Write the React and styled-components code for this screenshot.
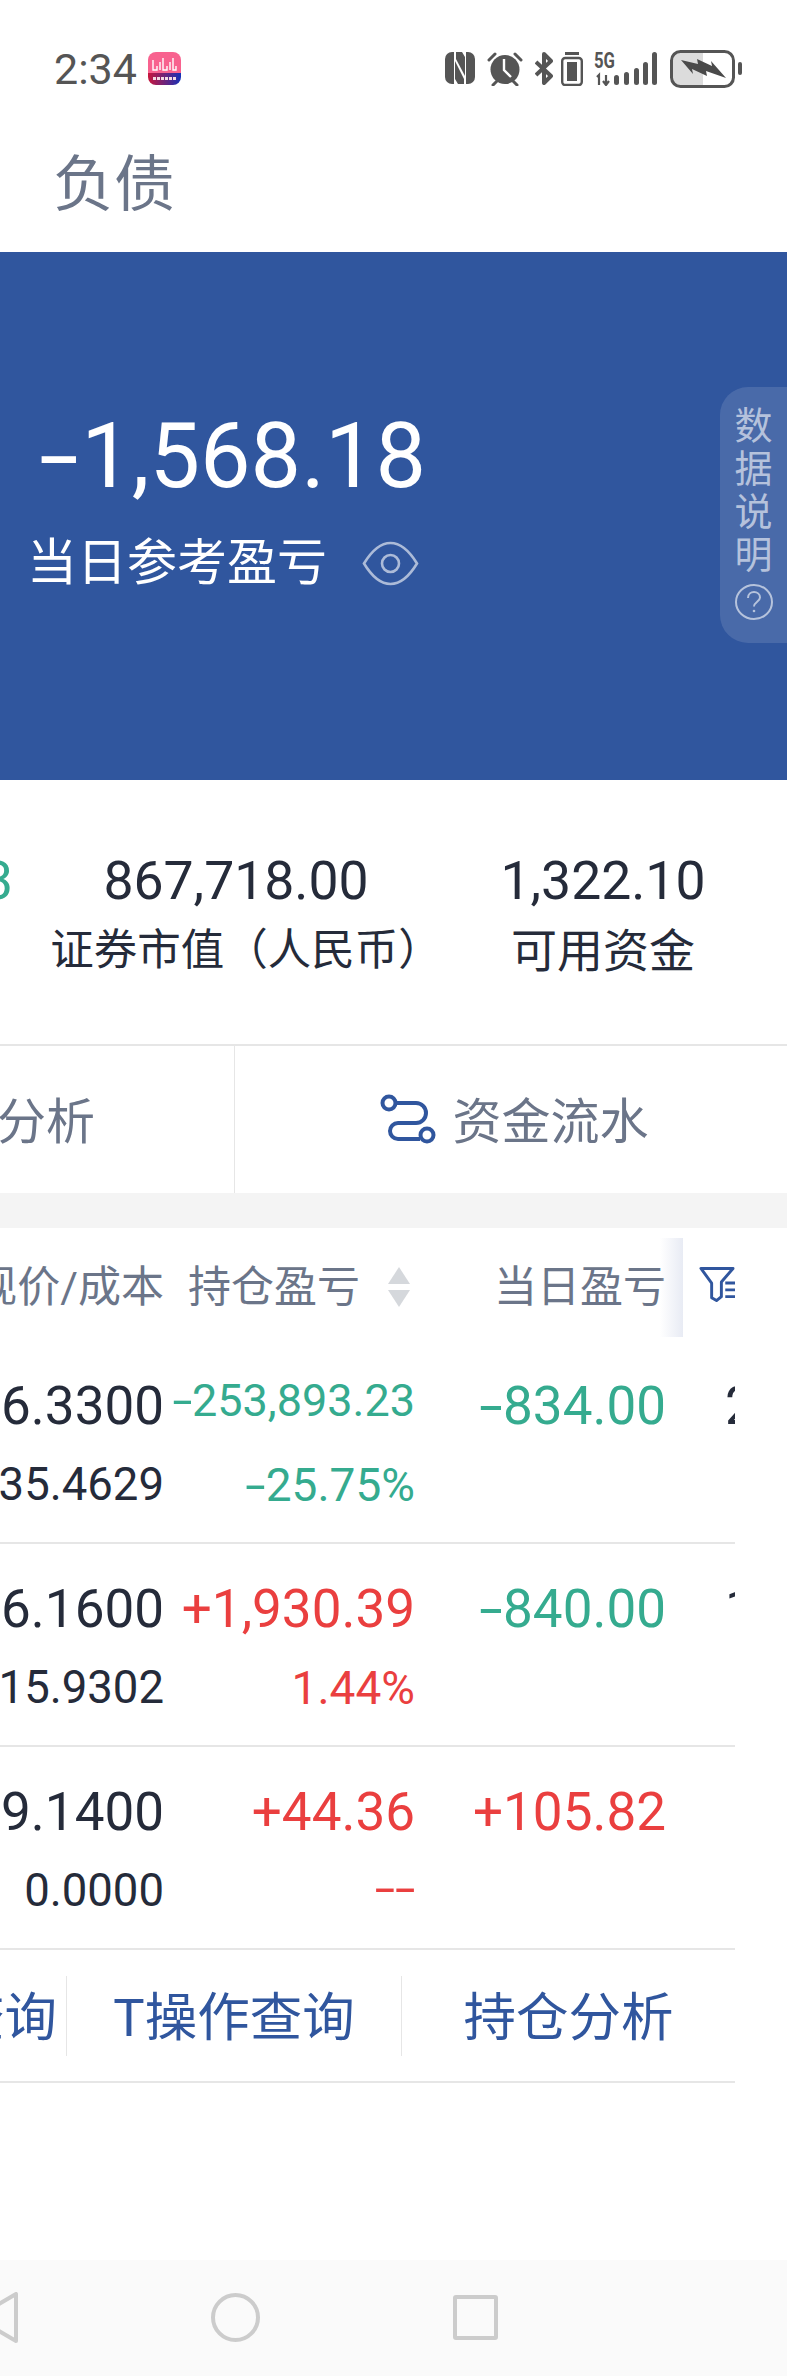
import React from 'react';
import styled, { createGlobalStyle } from 'styled-components';

const GlobalStyle = createGlobalStyle`
    html, body {
        margin: 0;
        padding: 0;
        background: #fff;
        font-family: Roboto, "Noto Sans CJK SC", sans-serif;
    }
`;

const Page = styled.div`
    width: 787px;
    height: 2376px;
    display: flex;
    flex-direction: column;
    overflow: hidden;
    background: #fff;
`;

// status bar
const StatusBar = styled.div`
    height: 133px;
    box-sizing: border-box;
    display: flex;
    justify-content: space-between;
    padding: 45px 45px 0 54px;
    color: #555;
`;

const Clock = styled.div`
    display: flex;
    align-items: flex-start;
    gap: 11px;
    font-size: 43px;
    line-height: 48px;
`;

const AppBadge = styled.svg`
    margin-top: 7px;
`;

const StatusIcons = styled.div`
    display: flex;
    align-items: flex-start;
    margin-top: 7px;
    svg { display: block; }
`;

const StatusGlyph = styled.svg`
    margin-right: ${props => props.$gap || 0}px;
    margin-top: ${props => props.$top || 0}px;
`;

const TitleBar = styled.div`
    height: 119px;
    box-sizing: border-box;
    display: flex;
    align-items: center;
    padding: 0 0 26px 53px;
    font-size: 61px;
    color: #6b7589;
`;

// blue panel
const Hero = styled.div`
    position: relative;
    height: 528px;
    box-sizing: border-box;
    padding: 155px 0 0 27px;
    background: #30569e;
    color: #fff;
`;

const HeroValue = styled.div`
    font-size: 90px;
    line-height: 100px;
    margin-left: 14px;
`;

const HeroLabel = styled.div`
    display: flex;
    align-items: center;
    gap: 35px;
    margin-top: 26px;
    font-size: 50px;
    line-height: 60px;
`;

const SideTab = styled.div`
    position: absolute;
    top: 135px;
    right: 0;
    width: 67px;
    height: 256px;
    box-sizing: border-box;
    padding-top: 18px;
    display: flex;
    flex-direction: column;
    align-items: center;
    border-radius: 28px 0 0 28px;
    background: rgba(255, 255, 255, 0.12);
    color: rgba(255, 255, 255, 0.6);
    font-size: 38px;
    line-height: 43px;
    text-align: center;
`;

const SideChars = styled.div`
    width: 38px;
    margin-bottom: 7px;
`;

// summary figures
const Stats = styled.div`
    height: 264px;
    box-sizing: border-box;
    padding-top: 69px;
    display: grid;
    grid-template-columns: 13px 446px 288px;
    overflow: hidden;
`;

const Stat = styled.div`
    display: flex;
    flex-direction: column;
    align-items: ${props => props.$edge ? 'flex-end' : 'center'};
    white-space: nowrap;
`;

const StatValue = styled.div`
    font-size: 53.5px;
    line-height: 64px;
    color: ${props => props.color || '#252b3a'};
`;

const StatLabel = styled.div`
    margin-top: 10px;
    margin-left: ${props => props.$nudge || 0}px;
    font-size: ${props => props.$size || 44}px;
    line-height: 56px;
    color: #252b3a;
`;

const Actions = styled.div`
    height: 149px;
    box-sizing: border-box;
    display: flex;
    border-top: 2px solid #e6e6e6;
    font-size: 49px;
    color: #6b7589;
`;

const ActionLeft = styled.div`
    width: 235px;
    box-sizing: border-box;
    display: flex;
    align-items: center;
    justify-content: flex-end;
    padding: 0 139px 4px 0;
    border-right: 1px solid #e6e6e6;
    white-space: nowrap;
`;

const ActionRight = styled.div`
    flex: 1;
    display: flex;
    align-items: center;
    justify-content: center;
    gap: 16px;
    padding: 0 0 4px 7px;
`;

const FlowSvg = styled.svg`
    margin-top: 4px;
`;

const Band = styled.div`
    height: 35px;
    background: #f4f4f4;
`;

// holdings table
const Table = styled.div`
    width: 735px;
    overflow: hidden;
`;

const COLUMNS = '164px 251px 251px 69px';

const HeaderRow = styled.div`
    position: relative;
    height: 113px;
    box-sizing: border-box;
    padding-top: 4px;
    display: grid;
    grid-template-columns: ${COLUMNS};
    align-items: center;
    font-size: 43px;
    line-height: 56px;
    color: #6b7589;
    white-space: nowrap;
`;

const HeaderCell = styled.div`
    display: flex;
    align-items: center;
    justify-content: flex-end;
    gap: ${props => props.$gap || 0}px;
    padding-right: ${props => props.$pad || 0}px;
`;

const FilterCell = styled.div`
    padding: 0 0 4px 33px;
    display: flex;
`;

const Fade = styled.div`
    position: absolute;
    top: 10px;
    left: 660px;
    width: 23px;
    height: 99px;
    background: linear-gradient(to right, rgba(232, 235, 244, 0), #e8ebf4);
`;

const SortArrows = styled.div`
    display: flex;
    flex-direction: column;
    gap: 6px;
`;

const Arrow = styled.div`
    width: 0;
    height: 0;
    border-left: 11px solid transparent;
    border-right: 11px solid transparent;
    border-${props => props.$down ? 'top' : 'bottom'}: 17px solid #d5d8dc;
`;

const Row = styled.div`
    height: 203px;
    box-sizing: border-box;
    padding-top: 33px;
    display: grid;
    grid-template-columns: ${COLUMNS};
    border-bottom: 2px solid #e6e6e6;
    white-space: nowrap;
`;

const Cell = styled.div`
    display: flex;
    flex-direction: column;
    align-items: ${props => props.$start ? 'flex-start' : 'flex-end'};
    padding-left: ${props => props.$start ? 59 : 0}px;
`;

const Main = styled.div`
    height: 64px;
    font-size: ${props => props.$small ? 45 : 53}px;
    line-height: ${props => props.$small ? 54 : 64}px;
    color: ${props => props.color || '#252b3a'};
`;

const Sub = styled.div`
    margin-top: 20px;
    font-size: ${props => props.$size || 45.5}px;
    line-height: 54px;
    color: ${props => props.color || '#252b3a'};
`;

// the app's minus is wider than Roboto's hyphen
const Minus = styled.span`
    display: inline-block;
    transform: scaleX(1.6);
    transform-origin: right;
    margin-left: ${props => props.$lead}em;
    margin-right: ${props => props.$gap}em;
`;

const Dashes = styled.span`
    display: inline-block;
    transform: translateY(-3px) scaleX(1.6);
    transform-origin: right;
`;

const Links = styled.div`
    height: 133px;
    box-sizing: border-box;
    display: grid;
    grid-template-columns: 67px 335px 1fr;
    align-items: center;
    border-bottom: 2px solid #e6e6e6;
    font-size: 52.5px;
    color: #30569e;
    white-space: nowrap;
`;

const LinkCell = styled.div`
    height: 80px;
    box-sizing: border-box;
    display: flex;
    align-items: center;
    justify-content: ${props => props.$edge ? 'flex-end' : 'center'};
    padding: 0 ${props => props.$edge ? 9 : 0}px 6px 0;
    border-right: ${props => props.$last ? 'none' : '1px solid #e6e6e6'};
`;

// system navigation
const NavBar = styled.div`
    margin-top: auto;
    height: 116px;
    box-sizing: border-box;
    padding-bottom: 2px;
    flex-shrink: 0;
    display: grid;
    grid-template-columns: repeat(3, 240px);
    margin-left: -125px;
    width: 912px;
    align-items: center;
    justify-items: center;
    background: #fafafa;
`;

const NavCircle = styled.div`
    width: 49px;
    height: 49px;
    box-sizing: border-box;
    border: 4px solid #ccc;
    border-radius: 50%;
`;

const NavSquare = styled.div`
    width: 45px;
    height: 45px;
    box-sizing: border-box;
    border: 4px solid #ccc;
    border-radius: 3px;
`;

const GREEN = '#35ab8f';
const RED = '#ea3f3f';

const rows = [
    { price: '6.3300', cost: '35.4629', pnl: '-253,893.23', small: true, pct: '-25.75%', tone: GREEN, day: '-834.00', dayTone: GREEN, next: '2' },
    { price: '6.1600', cost: '15.9302', pnl: '+1,930.39', pct: '1.44%', tone: RED, day: '-840.00', dayTone: GREEN, next: '1' },
    { price: '9.1400', cost: '0.0000', pnl: '+44.36', pct: '--', tone: RED, day: '+105.82', dayTone: RED },
];

const signed = (text, lead = 0.14, gap = 0) => {
    if (text === '--') return <Dashes>--</Dashes>;
    if (text[0] !== '-') return text;
    return <><Minus $lead={lead} $gap={gap}>-</Minus>{text.slice(1)}</>;
};

const AppIcon = () => (
    <AppBadge width="33" height="33" viewBox="0 0 33 33">
        <defs>
            <linearGradient id="badgeBar" x1="0" x2="1" y1="0" y2="0">
                <stop offset="0" stopColor="#c8163c" />
                <stop offset="1" stopColor="#1531b8" />
            </linearGradient>
            <clipPath id="badgeClip">
                <rect width="33" height="33" rx="8" />
            </clipPath>
        </defs>
        <g clipPath="url(#badgeClip)">
            <rect width="33" height="22" fill="#f8628f" />
            <rect y="21" width="33" height="12" fill="url(#badgeBar)" />
            <path d="M5 8v10h4v-4M12 10v8M15 6v12h4v-4M22 10v8M25 6v12h3v-4" stroke="#fff" strokeWidth="1.4" fill="none" />
            <path d="M5 26.500H28" stroke="#f3dbe3" strokeWidth="3" strokeDasharray="3 1" />
        </g>
    </AppBadge>
);

const NfcIcon = () => (
    <StatusGlyph $gap={12} width="30" height="32" viewBox="0 0 30 32" fill="#555">
        <path d="M7 0H9V32H7A7 7 0 0 1 0 25V7A7 7 0 0 1 7 0Z" />
        <path d="M23 0H21V32H23A7 7 0 0 0 30 25V7A7 7 0 0 0 23 0Z" />
        <path d="M11 0H17L20 5V24L11 7Z" />
        <path d="M10 9L19 27V32H13L10 27Z" />
    </StatusGlyph>
);

const AlarmIcon = () => (
    <StatusGlyph $gap={12} width="36" height="34" viewBox="0 0 36 34">
        <circle cx="18" cy="17.500" r="14.500" fill="#555" />
        <path d="M2 8l6-6M34 8l-6-6M6 33l4-4M30 33l-4-4" stroke="#555" strokeWidth="3" strokeLinecap="round" />
        <path d="M17 7v11l7 7" stroke="#fff" strokeWidth="2.4" fill="none" />
    </StatusGlyph>
);

const BluetoothIcon = () => (
    <StatusGlyph $gap={8} width="18" height="33" viewBox="0 0 18 33">
        <path d="M1 10l15 14-7 7V2l7 7L1 23" stroke="#555" strokeWidth="4" fill="none" strokeLinejoin="round" />
    </StatusGlyph>
);

const SmallBattery = () => (
    <StatusGlyph $gap={11} width="22" height="34" viewBox="0 0 22 34">
        <rect x="4" y="0" width="14" height="3" fill="#555" />
        <rect x="1.200" y="6" width="19.600" height="27" rx="3" fill="none" stroke="#555" strokeWidth="2.400" />
        <rect x="6" y="10" width="10" height="19" fill="#555" />
    </StatusGlyph>
);

const SignalIcon = () => (
    <StatusGlyph $gap={12} width="64" height="34" viewBox="0 0 64 34">
        <text x="0" y="16" fontFamily="Roboto, sans-serif" fontWeight="700" fontSize="22" fill="#555" textLength="21" lengthAdjust="spacingAndGlyphs">5G</text>
        <path d="M3 25l2-2v10M12 23v10M9 29l3 4 3-4" stroke="#555" strokeWidth="2.200" fill="none" />
        <rect x="20" y="23" width="5" height="10" rx="2.500" fill="#555" />
        <rect x="30" y="20" width="5" height="13" rx="2.500" fill="#555" />
        <rect x="40" y="16" width="5" height="17" rx="2.500" fill="#555" />
        <rect x="49" y="10" width="5" height="23" rx="2.500" fill="#555" />
        <rect x="58" y="0" width="5" height="33" rx="2.500" fill="#555" />
    </StatusGlyph>
);

const ChargeBattery = () => (
    <StatusGlyph $top={-2} width="72" height="38" viewBox="0 0 72 38">
        <rect x="3" y="3" width="30" height="32" fill="#dcdcdc" />
        <rect x="1.500" y="1.500" width="62" height="35" rx="9" fill="none" stroke="#555" strokeWidth="3" />
        <path d="M11 10L28 14L27 9L42 16L41 11L56 28L36 21L37 26L22 19L23 24Z" fill="#4a4a4a" />
        <rect x="68" y="12" width="4" height="13" rx="2" fill="#555" />
    </StatusGlyph>
);

const EyeIcon = () => (
    <svg width="57" height="45" viewBox="0 0 57 45" fill="none" stroke="rgba(255,255,255,.6)" strokeWidth="2.600">
        <path d="M2 22.500C9 11 18 2 28.500 2S48 11 55 22.500C48 34 39 43 28.500 43S9 34 2 22.500Z" />
        <circle cx="28.500" cy="22.500" r="8.500" />
    </svg>
);

const QuestionIcon = () => (
    <svg width="38" height="36" viewBox="0 0 38 36" fill="none" stroke="rgba(255,255,255,.6)" strokeWidth="2">
        <ellipse cx="19" cy="18" rx="18" ry="17" />
        <path d="M13 14c0-4 3-6 6-6s6 2 6 5.500c0 4-6 4.500-6 9" />
        <circle cx="19" cy="27" r="1.300" fill="rgba(255,255,255,.6)" stroke="none" />
    </svg>
);

const FlowIcon = () => (
    <FlowSvg width="56" height="51" viewBox="0 0 56 51" fill="none" stroke="#30569e" strokeWidth="4">
        <circle cx="9" cy="9" r="6.500" />
        <circle cx="47" cy="41" r="6.500" />
        <path d="M16 9H36a10 10 0 0 1 0 20H18a8 8 0 0 0 0 16H40" />
    </FlowSvg>
);

const FilterIcon = () => (
    <svg width="37" height="37" viewBox="0 0 37 37" fill="none" stroke="#30569e" strokeWidth="3" strokeLinejoin="round">
        <path d="M2 2H35L23 16V31L18 35L13 32V17Z" />
        <path d="M27 17H37M27 24H37M27 31H37" />
    </svg>
);

const BackIcon = () => (
    <svg width="46" height="51" viewBox="0 0 46 51" fill="none" stroke="#ccc" strokeWidth="4" strokeLinejoin="round">
        <path d="M44 2V49L4 25.500Z" />
    </svg>
);

export default function App() {
    return (
        <Page>
            <GlobalStyle />
            <StatusBar>
                <Clock>2:34<AppIcon /></Clock>
                <StatusIcons>
                    <NfcIcon />
                    <AlarmIcon />
                    <BluetoothIcon />
                    <SmallBattery />
                    <SignalIcon />
                    <ChargeBattery />
                </StatusIcons>
            </StatusBar>
            <TitleBar>负债</TitleBar>

            <Hero>
                <HeroValue>{signed('-1,568.18', 0.14, 0.03)}</HeroValue>
                <HeroLabel>当日参考盈亏<EyeIcon /></HeroLabel>
                <SideTab>
                    <SideChars>数据说明</SideChars>
                    <QuestionIcon />
                </SideTab>
            </Hero>

            <Stats>
                <Stat $edge><StatValue color={GREEN}>3</StatValue></Stat>
                <Stat>
                    <StatValue>867,718.00</StatValue>
                    <StatLabel $size={43.5} $nudge={20}>证券市值（人民币）</StatLabel>
                </Stat>
                <Stat>
                    <StatValue>1,322.10</StatValue>
                    <StatLabel $size={46}>可用资金</StatLabel>
                </Stat>
            </Stats>

            <Actions>
                <ActionLeft>分析</ActionLeft>
                <ActionRight><FlowIcon />资金流水</ActionRight>
            </Actions>
            <Band />

            <Table>
                <HeaderRow>
                    <HeaderCell>现价/成本</HeaderCell>
                    <HeaderCell $gap={28} $pad={5}>
                        持仓盈亏
                        <SortArrows>
                            <Arrow />
                            <Arrow $down />
                        </SortArrows>
                    </HeaderCell>
                    <HeaderCell>当日盈亏</HeaderCell>
                    <FilterCell><FilterIcon /></FilterCell>
                    <Fade />
                </HeaderRow>
                {rows.map(row => (
                    <Row key={row.price}>
                        <Cell>
                            <Main>{row.price}</Main>
                            <Sub>{row.cost}</Sub>
                        </Cell>
                        <Cell>
                            <Main $small={row.small} color={row.tone}>{signed(row.pnl, 0.05)}</Main>
                            <Sub $size={46} color={row.tone}>{signed(row.pct)}</Sub>
                        </Cell>
                        <Cell>
                            <Main color={row.dayTone}>{signed(row.day)}</Main>
                        </Cell>
                        <Cell $start>
                            <Main>{row.next}</Main>
                        </Cell>
                    </Row>
                ))}
                <Links>
                    <LinkCell $edge>查询</LinkCell>
                    <LinkCell>T操作查询</LinkCell>
                    <LinkCell $last>持仓分析</LinkCell>
                </Links>
            </Table>

            <NavBar>
                <BackIcon />
                <NavCircle />
                <NavSquare />
            </NavBar>
        </Page>
    );
}
